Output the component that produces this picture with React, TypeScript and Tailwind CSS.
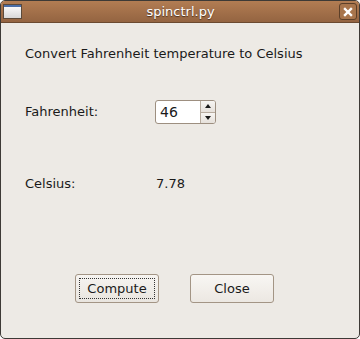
export default function App() {
  return (
    <div className="w-[360px] h-[339px] bg-white" style={{ fontFamily: '"DejaVu Sans", sans-serif' }}>
      <div className="w-full h-full flex flex-col rounded-t-[5px] rounded-b-[5px] border border-[#3d3a36] overflow-hidden bg-[#edeae5]">
        {/* title bar */}
        <div className="h-[22px] shrink-0 flex items-center justify-between px-[2px] bg-gradient-to-b from-[#b27d53] to-[#946441] border-b border-[#6b4a30]">
          <div className="w-[19px] h-[15px] border border-[#5c4a3a] bg-gradient-to-b from-[#ffffff] to-[#d8d8d8] flex flex-col">
            <div className="h-[2px] bg-[#4a6ea8]" />
          </div>
          <span className="text-[13px] text-white [text-shadow:0_1px_1px_#4a3020]">spinctrl.py</span>
          <div className="w-[18px] h-[17px] rounded-[3px] border border-[#5c3f28] bg-[#a8754c] flex items-center justify-center">
            <svg width="10" height="10" viewBox="0 0 10 10">
              <path d="M2 2 L8 8 M8 2 L2 8" stroke="white" strokeWidth="2.4" strokeLinecap="square" />
            </svg>
          </div>
        </div>
        {/* content */}
        <div className="flex-1 flex flex-col px-[24px] text-[13px] text-[#1a1a1a]">
          <div className="mt-[23px] h-[16px] leading-[16px]">Convert Fahrenheit temperature to Celsius</div>
          <div className="mt-[38px] flex items-center h-[24px]">
            <span className="w-[130px]">Fahrenheit:</span>
            <div className="flex h-[24px] w-[61px] border border-[#9d8f80] rounded-[3px] bg-white overflow-hidden">
              <div className="flex-1 flex items-center pl-[4px] text-[14px]">46</div>
              <div className="w-[15px] flex flex-col border-l border-[#b7ab9e]">
                <div className="flex-1 flex items-center justify-center bg-gradient-to-b from-[#f7f5f2] to-[#e6e1db] border-b border-[#b7ab9e]">
                  <svg width="6" height="4" viewBox="0 0 6 4"><path d="M0 4 L3 0 L6 4 Z" fill="#1a1a1a" /></svg>
                </div>
                <div className="flex-1 flex items-center justify-center bg-gradient-to-b from-[#f7f5f2] to-[#e6e1db]">
                  <svg width="6" height="4" viewBox="0 0 6 4"><path d="M0 0 L3 4 L6 0 Z" fill="#1a1a1a" /></svg>
                </div>
              </div>
            </div>
          </div>
          <div className="mt-[52px] flex items-center h-[16px]">
            <span className="w-[131px]">Celsius:</span>
            <span>7.78</span>
          </div>
          <div className="mt-[82px] flex gap-[31px] pl-[50px]">
            <button className="w-[84px] h-[29px] rounded-[3px] border border-[#a39585] bg-gradient-to-b from-[#f6f4f1] to-[#e9e5df] flex items-center justify-center p-[3px]">
              <span className="w-full h-full border border-dotted border-[#333] flex items-center justify-center">Compute</span>
            </button>
            <button className="w-[84px] h-[29px] rounded-[3px] border border-[#a39585] bg-gradient-to-b from-[#f8f6f3] to-[#ece8e2] flex items-center justify-center">
              Close
            </button>
          </div>
        </div>
      </div>
    </div>
  )
}
